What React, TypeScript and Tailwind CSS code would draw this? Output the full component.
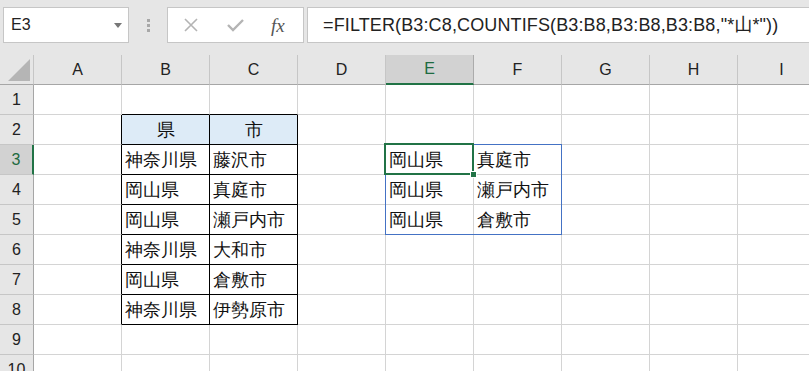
import React from 'react';

const cols = ['A', 'B', 'C', 'D', 'E', 'F', 'G', 'H', 'I'];
const rows = [1, 2, 3, 4, 5, 6, 7, 8, 9, 10];

const cells: Record<string, string> = {
  B2: '県', C2: '市',
  B3: '神奈川県', C3: '藤沢市',
  B4: '岡山県', C4: '真庭市',
  B5: '岡山県', C5: '瀬戸内市',
  B6: '神奈川県', C6: '大和市',
  B7: '岡山県', C7: '倉敷市',
  B8: '神奈川県', C8: '伊勢原市',
  E3: '岡山県', F3: '真庭市',
  E4: '岡山県', F4: '瀬戸内市',
  E5: '岡山県', F5: '倉敷市',
};

const inTable = (c: number, r: number) => (c === 1 || c === 2) && r >= 2 && r <= 8;

function Toolbar() {
  return (
    <div className="h-[55px] bg-[#e6e6e6] flex items-start pt-[7px] shrink-0">
      {/* name box */}
      <div className="ml-[3px] w-[126px] shrink-0 h-[36px] bg-white border border-[#c6c6c6] flex items-center justify-between pl-[7px] pr-[6px]">
        <span className="text-[16px] text-[#222] font-['Liberation_Sans',sans-serif]">E3</span>
        <svg width="8" height="5" viewBox="0 0 8 5">
          <path d="M0 0 L8 0 L4 5 Z" fill="#777" />
        </svg>
      </div>
      <div className="w-[38px] shrink-0 h-[36px] flex flex-col items-center justify-center gap-[2px]">
        <div className="w-[3px] h-[3px] bg-[#a8a8a8]" />
        <div className="w-[3px] h-[3px] bg-[#a8a8a8]" />
        <div className="w-[3px] h-[3px] bg-[#a8a8a8]" />
      </div>
      {/* cancel / enter / fx */}
      <div className="w-[137px] shrink-0 h-[36px] bg-white border border-[#c6c6c6] flex items-center">
        <svg className="ml-[15px]" width="16" height="16" viewBox="0 0 16 16">
          <path d="M2 2 L14 14 M14 2 L2 14" stroke="#b4b4b4" strokeWidth="1.6" />
        </svg>
        <svg className="ml-[28px]" width="17" height="14" viewBox="0 0 17 14">
          <path d="M1 7 L6 12 L16 2" stroke="#b4b4b4" strokeWidth="2.4" fill="none" />
        </svg>
        <span className="ml-[27px] text-[19px] italic text-[#555] font-['Liberation_Serif',serif] leading-none">fx</span>
      </div>
      <div className="ml-[3px] flex-1 h-[36px] bg-white border border-[#c6c6c6] border-r-0 flex items-center pl-[15px]">
        <span className="text-[18px] tracking-[0.13px] text-[#222] font-['Liberation_Sans','Noto_Sans_CJK_JP',sans-serif] whitespace-nowrap">
          =FILTER(B3:C8,COUNTIFS(B3:B8,B3:B8,B3:B8,"*山*"))
        </span>
      </div>
    </div>
  );
}

function ColumnHeader() {
  return (
    <div className="flex h-[30px] shrink-0">
      <div className="w-[34px] shrink-0 h-[30px] bg-[#e6e6e6] border-r border-b border-r-[#c6c6c6] border-b-[#a6a6a6] flex items-end justify-end pr-[3px] pb-[3px]">
        <svg width="22" height="22" viewBox="0 0 22 22">
          <path d="M22 0 L22 22 L0 22 Z" fill="#b5b5b5" />
        </svg>
      </div>
      {cols.map((c) =>
        c === 'E' ? (
          <div
            key={c}
            className="w-[88px] shrink-0 h-[30px] bg-[#d2d2d2] border-r border-r-[#ababab] border-b-2 border-b-[#217346] flex items-center justify-center text-[16px] text-[#1e6b41] font-['Liberation_Sans',sans-serif]"
          >
            {c}
          </div>
        ) : (
          <div
            key={c}
            className="w-[88px] shrink-0 h-[30px] bg-[#e6e6e6] border-r border-b border-r-[#c6c6c6] border-b-[#a6a6a6] flex items-center justify-center text-[16px] text-[#222] font-['Liberation_Sans',sans-serif]"
          >
            {c}
          </div>
        )
      )}
    </div>
  );
}

function Row({ r }: { r: number }) {
  return (
    <div className="flex h-[30px] shrink-0">
      {r === 3 ? (
        <div className="w-[34px] shrink-0 h-[30px] bg-[#d2d2d2] border-r-2 border-b border-r-[#217346] border-b-[#c6c6c6] flex items-center justify-center text-[16px] text-[#1e6b41] font-['Liberation_Sans',sans-serif]">
          {r}
        </div>
      ) : (
        <div className="w-[34px] shrink-0 h-[30px] bg-[#e6e6e6] border-r border-b border-r-[#a6a6a6] border-b-[#c6c6c6] flex items-center justify-center text-[16px] text-[#222] font-['Liberation_Sans',sans-serif]">
          {r}
        </div>
      )}
      {cols.map((c, ci) => {
        const key = `${c}${r}`;
        const rightBlack = inTable(ci, r) || inTable(ci + 1, r);
        const bottomBlack = inTable(ci, r) || inTable(ci, r + 1);
        const head = r === 2 && inTable(ci, r);
        return (
          <div
            key={key}
            className={[
              'w-[88px] shrink-0 h-[30px] border-r border-b flex items-center text-[18px] text-[#111] font-[\'Noto_Sans_CJK_JP\',sans-serif] whitespace-nowrap overflow-hidden',
              rightBlack ? 'border-r-black' : 'border-r-[#d4d4d4]',
              bottomBlack ? 'border-b-black' : 'border-b-[#d4d4d4]',
              head ? 'bg-[#ddebf7] justify-center' : 'bg-white pl-[3px]',
            ].join(' ')}
          >
            {cells[key] ?? ''}
          </div>
        );
      })}
    </div>
  );
}

export default function App() {
  return (
    <div className="w-[809px] h-[371px] overflow-hidden bg-white flex flex-col">
      <Toolbar />
      <div className="relative flex flex-col">
        <ColumnHeader />
        {rows.map((r) => (
          <Row key={r} r={r} />
        ))}
        {/* spill range */}
        <div className="absolute left-[385px] top-[89px] w-[177px] h-[91px] border border-[#4472c4] pointer-events-none" />
        {/* active cell */}
        <div className="absolute left-[384px] top-[88px] w-[90px] h-[32px] border-2 border-[#217346] pointer-events-none" />
        <div className="absolute left-[470px] top-[116px] w-[7px] h-[7px] bg-[#217346] border border-white" />
      </div>
    </div>
  );
}
